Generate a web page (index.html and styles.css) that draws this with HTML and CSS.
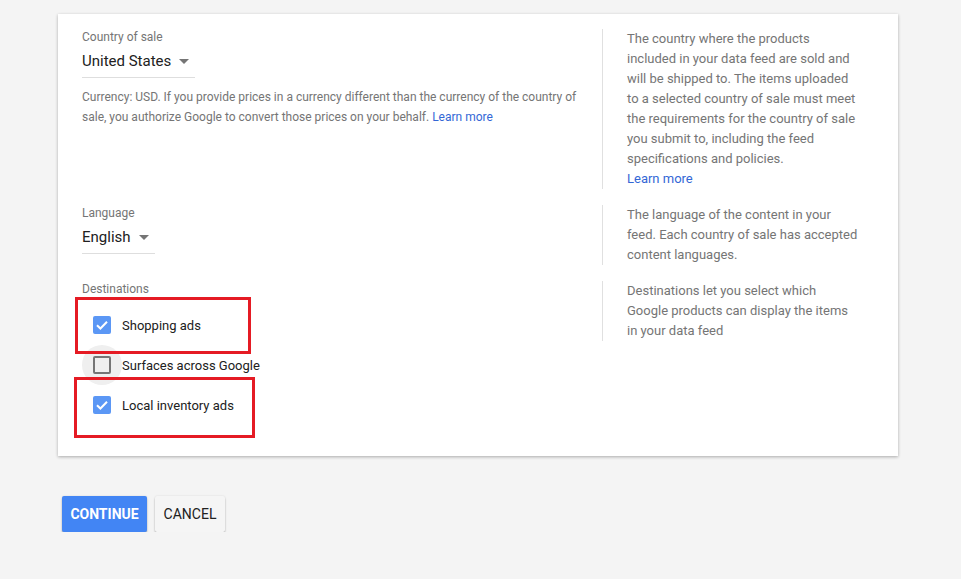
FILE: index.html
```html
<!DOCTYPE html>
<html lang="en">
<head>
    <meta charset="UTF-8">
    <title>Feed settings</title>
    <link rel="stylesheet" href="styles.css">
</head>
<body>
    <div class="card">
        <div class="row">
            <div class="main">
                <div class="label">Country of sale</div>
                <div class="select country">United States <span class="caret"></span></div>
                <p class="note">Currency: USD. If you provide prices in a currency different than the currency of the country of sale, you authorize Google to convert those prices on your behalf. <a href="#">Learn more</a></p>
            </div>
            <div class="help">The country where the products included in your data feed are sold and will be shipped to. The items uploaded to a selected country of sale must meet the requirements for the country of sale you submit to, including the feed specifications and policies.<br><a href="#">Learn more</a></div>
        </div>
        <div class="row">
            <div class="main">
                <div class="label">Language</div>
                <div class="select lang">English <span class="caret"></span></div>
            </div>
            <div class="help">The language of the content in your feed. Each country of sale has accepted content languages.</div>
        </div>
        <div class="row last">
            <div class="main">
                <div class="label">Destinations</div>
                <ul class="checks">
                    <li>
                        <span class="box-wrap"><span class="box checked"><svg viewBox="0 0 18 18" width="18" height="18"><polyline points="4,9.2 7.4,12.5 14,5.8" fill="none" stroke="#fff" stroke-width="2"/></svg></span></span>
                        Shopping ads
                    </li>
                    <li>
                        <span class="box-wrap focus"><span class="box"></span></span>
                        Surfaces across Google
                    </li>
                    <li>
                        <span class="box-wrap"><span class="box checked"><svg viewBox="0 0 18 18" width="18" height="18"><polyline points="4,9.2 7.4,12.5 14,5.8" fill="none" stroke="#fff" stroke-width="2"/></svg></span></span>
                        Local inventory ads
                    </li>
                </ul>
            </div>
            <div class="help">Destinations let you select which Google products can display the items in your data feed</div>
        </div>
        <div class="mark mark-1"></div>
        <div class="mark mark-2"></div>
    </div>
    <div class="actions">
        <button class="btn primary">Continue</button>
        <button class="btn cancel">Cancel</button>
    </div>
</body>
</html>
```

FILE: styles.css
```css
body {
    margin: 0;
    background-color: #f4f4f4;
    font-family: Roboto, "Liberation Sans", sans-serif;
    color: #212121;
}
.card {
    position: relative;
    width: 816px;
    margin: 14px 0 0 58px;
    padding: 15px 0 31px 24px;
    background-color: #fff;
    box-shadow: 0 1px 3px rgba(0, 0, 0, 0.3);
}
.row {
    display: flex;
    margin-bottom: 16px;
}
.row.last {
    margin-bottom: 0;
}
.main {
    width: 520px;
    padding-right: 20px;
    box-sizing: border-box;
}
.help {
    align-self: flex-start;
    width: 232px;
    padding-left: 24px;
    border-left: 1px solid #e0e0e0;
    font-size: 13px;
    line-height: 20px;
    color: #757575;
}
a {
    color: #3367d6;
    text-decoration: none;
}
.label {
    font-size: 12px;
    line-height: 16px;
    color: #757575;
}
.select {
    display: flex;
    align-items: center;
    margin-top: 4px;
    padding-bottom: 4px;
    border-bottom: 1px solid #dedede;
    font-size: 15px;
    line-height: 24px;
    box-sizing: border-box;
}
.country {
    width: 113px;
}
.lang {
    width: 73px;
}
.caret {
    margin-left: 8px;
    width: 0;
    height: 0;
    border-left: 5px solid transparent;
    border-right: 5px solid transparent;
    border-top: 5px solid #757575;
}
.note {
    margin: 9px 0 0;
    font-size: 12px;
    line-height: 20px;
    color: #757575;
}
.checks {
    list-style: none;
    margin: 8px 0 0;
    padding: 0;
}
.checks li {
    display: flex;
    align-items: center;
    height: 40px;
    font-size: 13px;
}
.box-wrap {
    display: flex;
    align-items: center;
    justify-content: center;
    width: 40px;
    height: 40px;
    border-radius: 50%;
}
.box-wrap.focus {
    background-color: #efefef;
}
.box {
    width: 18px;
    height: 18px;
    border: 2px solid #757575;
    border-radius: 2px;
    box-sizing: border-box;
}
.box.checked {
    border: none;
    background-color: #5b97f5;
}
.box svg {
    display: block;
}
.mark {
    position: absolute;
    border: 3px solid #e51b24;
}
.mark-1 {
    left: 17px;
    top: 283px;
    width: 170px;
    height: 51px;
}
.mark-2 {
    left: 16px;
    top: 363px;
    width: 175px;
    height: 55px;
}
.actions {
    display: flex;
    gap: 8px;
    margin: 40px 0 0 62px;
}
.btn {
    height: 36px;
    padding: 0;
    border: none;
    border-radius: 2px;
    background-color: #f5f5f5;
    box-shadow: 0 2px 2px rgba(0, 0, 0, 0.24), 0 0 2px rgba(0, 0, 0, 0.12);
    font-family: Roboto, "Liberation Sans", sans-serif;
    font-size: 14px;
    font-weight: 400;
    text-transform: uppercase;
    color: #212121;
}
.btn.primary {
    width: 85px;
    background-color: #4285f4;
    color: #fff;
    font-weight: 700;
}
.btn.cancel {
    width: 70px;
}
```
